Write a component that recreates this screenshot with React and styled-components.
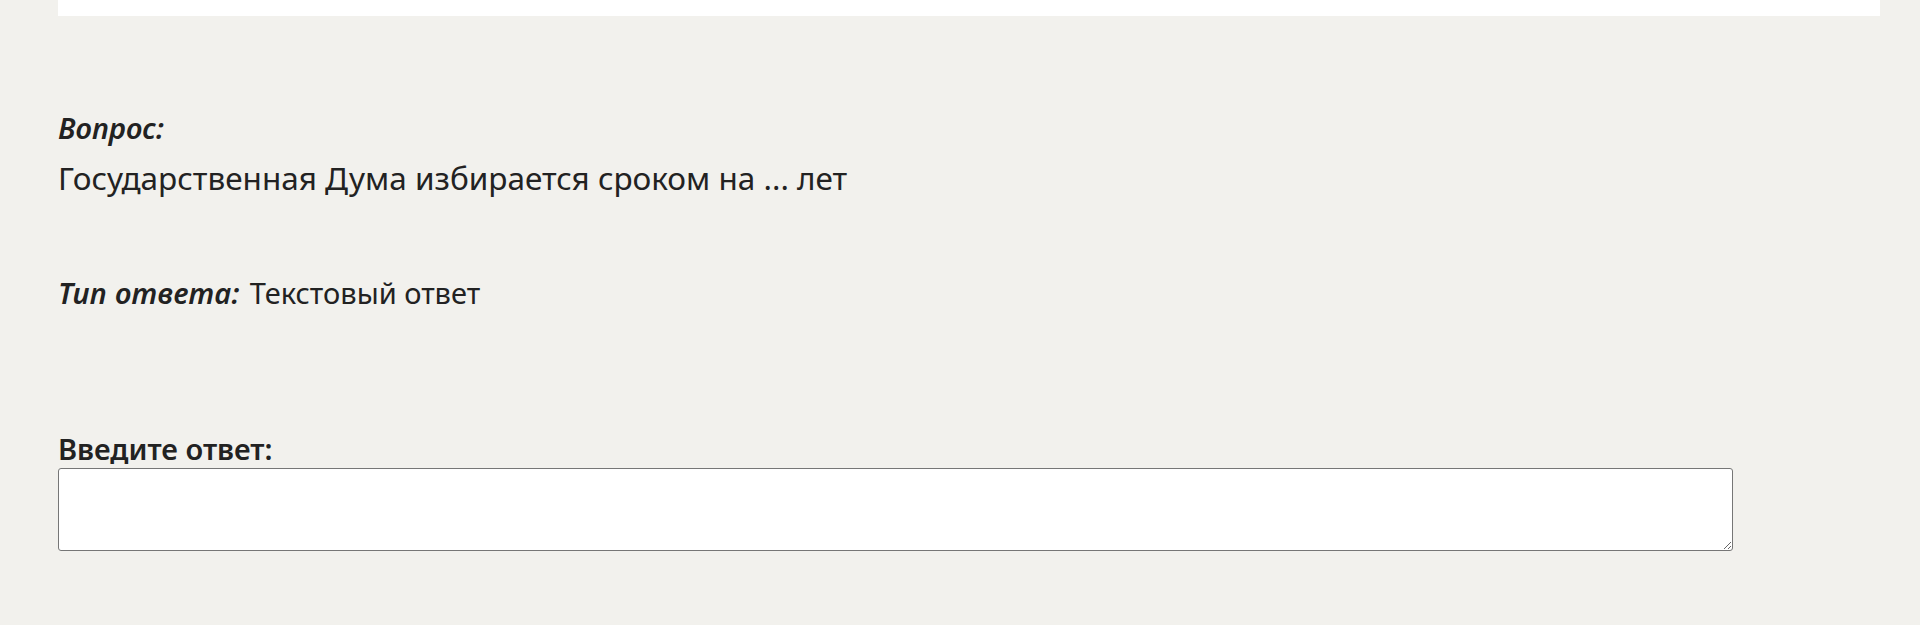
import styled, { createGlobalStyle } from "styled-components"

const Global = createGlobalStyle`
html, body {
  margin: 0;
  padding: 0;
  background: #f2f1ed;
}
body {
  font-family: "Noto Sans", "Open Sans", sans-serif;
  color: #222222;
}
`

const Page = styled.div`
padding: 0 40px 0 58px;
height: 625px;
box-sizing: border-box;
`

// bottom edge of the card above this block
const TopCard = styled.div`
height: 16px;
background: #ffffff;
`

const Section = styled.div`
padding-top: 97px;
`

const Label = styled.div`
font-size: 29px;
line-height: 30px;
font-style: italic;
font-weight: 600;
`

const Question = styled.div`
margin-top: 17px;
font-size: 31.5px;
line-height: 36px;
`

const TypeRow = styled.div`
margin-top: 82px;
font-size: 29px;
line-height: 30px;
`

const TypeLabel = styled.span`
font-style: italic;
font-weight: 600;
letter-spacing: 0.3px;
margin-right: 10px;
`

const AnswerLabel = styled.label`
display: block;
margin-top: 125px;
font-size: 29px;
line-height: 32px;
font-weight: 600;
`

const AnswerInput = styled.textarea`
display: block;
margin-top: 3px;
width: 1675px;
height: 83px;
box-sizing: border-box;
background: #ffffff;
border: 1px solid #767676;
border-radius: 3px;
font-family: inherit;
font-size: 20px;
`

const App = () => {
    return (
        <Page>
            <Global />
            <TopCard />
            <Section>
                <Label>Вопрос:</Label>
                <Question>Государственная Дума избирается сроком на ... лет</Question>
                <TypeRow>
                    <TypeLabel>Тип ответа:</TypeLabel>Текстовый ответ
                </TypeRow>
                <AnswerLabel htmlFor="answer">Введите ответ:</AnswerLabel>
                <AnswerInput id="answer" />
            </Section>
        </Page>
    )
}
export default App
